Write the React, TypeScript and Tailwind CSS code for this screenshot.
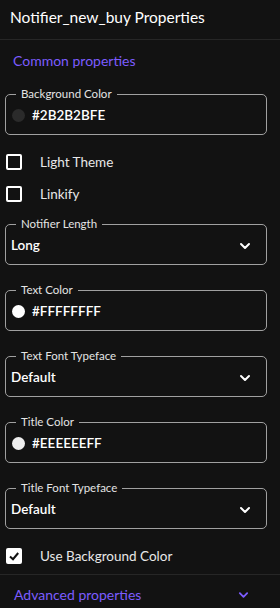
import React from "react";

const font = { fontFamily: "Lato, 'Noto Sans', sans-serif" };

function Chevron({ className = "", w = 12 }: { className?: string; w?: number }) {
  return (
    <svg width={w} height="8" viewBox="0 0 12 8" className={className}>
      <path d="M2 2 L6 6 L10 2" fill="none" stroke="currentColor" strokeWidth="2" strokeLinecap="round" strokeLinejoin="round" />
    </svg>
  );
}

function Field({ label, children }: { label: string; children: React.ReactNode }) {
  return (
    <div className="relative ml-[5px] mr-[13px] flex h-[41px] items-center rounded-[5px] border border-[#a0a0a0] pl-[5px]">
      <span className="absolute left-[10px] top-[-8px] bg-[#121212] px-[5px] text-[11.5px] leading-[14px] text-[#e4e4e4]">
        {label}
      </span>
      <div className="mt-[2px] flex w-full items-center">{children}</div>
    </div>
  );
}

function ColorField({ label, value, color }: { label: string; value: string; color: string }) {
  return (
    <Field label={label}>
      <span className="ml-[1px] h-[13px] w-[13px] rounded-full" style={{ background: color }} />
      <span className="ml-[7px] text-[13.5px] font-semibold text-white">{value}</span>
    </Field>
  );
}

function SelectField({ label, value }: { label: string; value: string }) {
  return (
    <Field label={label}>
      <span className="text-[13.5px] font-semibold text-white">{value}</span>
      <Chevron className="ml-auto mr-[15px] text-white" />
    </Field>
  );
}

function Check({ label, checked }: { label: string; checked?: boolean }) {
  return (
    <div className="flex h-[16px] items-center">
      {checked ? (
        <span className="ml-[6px] flex h-[16px] w-[16px] items-center justify-center rounded-[2px] bg-white">
          <svg width="12" height="12" viewBox="0 0 12 12">
            <path d="M2 6.5 L5 9.2 L10.2 3" fill="none" stroke="#111" strokeWidth="2" />
          </svg>
        </span>
      ) : (
        <span className="ml-[6px] h-[16px] w-[16px] rounded-[2px] border-2 border-white" />
      )}
      <span className="ml-[18px] text-[13.5px] text-[#e8e8e8]">{label}</span>
    </div>
  );
}

export default function App() {
  return (
    <div className="w-[280px] h-[608px] overflow-hidden bg-[#121212]" style={font}>
      <div className="flex h-[40px] items-center border-b border-[#262626] pb-[3px] pl-[10px] text-[15.5px] text-white">
        Notifier_new_buy Properties
      </div>
      <div className="flex h-[40px] items-center pl-[13px] text-[14px] text-[#7c5cff]">Common properties</div>
      <div className="flex flex-col">
        <div className="mt-[14px]">
          <ColorField label="Background Color" value="#2B2B2BFE" color="#2b2b2b" />
        </div>
        <div className="mt-[19px]"><Check label="Light Theme" /></div>
        <div className="mt-[16px]"><Check label="Linkify" /></div>
        <div className="mt-[22px]"><SelectField label="Notifier Length" value="Long" /></div>
        <div className="mt-[25px]"><ColorField label="Text Color" value="#FFFFFFFF" color="#ffffff" /></div>
        <div className="mt-[25px]"><SelectField label="Text Font Typeface" value="Default" /></div>
        <div className="mt-[25px]"><ColorField label="Title Color" value="#EEEEEEFF" color="#eeeeee" /></div>
        <div className="mt-[25px]"><SelectField label="Title Font Typeface" value="Default" /></div>
        <div className="mt-[19px]"><Check label="Use Background Color" checked /></div>
      </div>
      <div className="mt-[10px] flex h-[40px] items-center border-t border-[#262626] pl-[14px] pr-[31px] text-[14px] text-[#7c5cff]">
        Advanced properties
        <Chevron className="ml-auto" w={11} />
      </div>
    </div>
  );
}
